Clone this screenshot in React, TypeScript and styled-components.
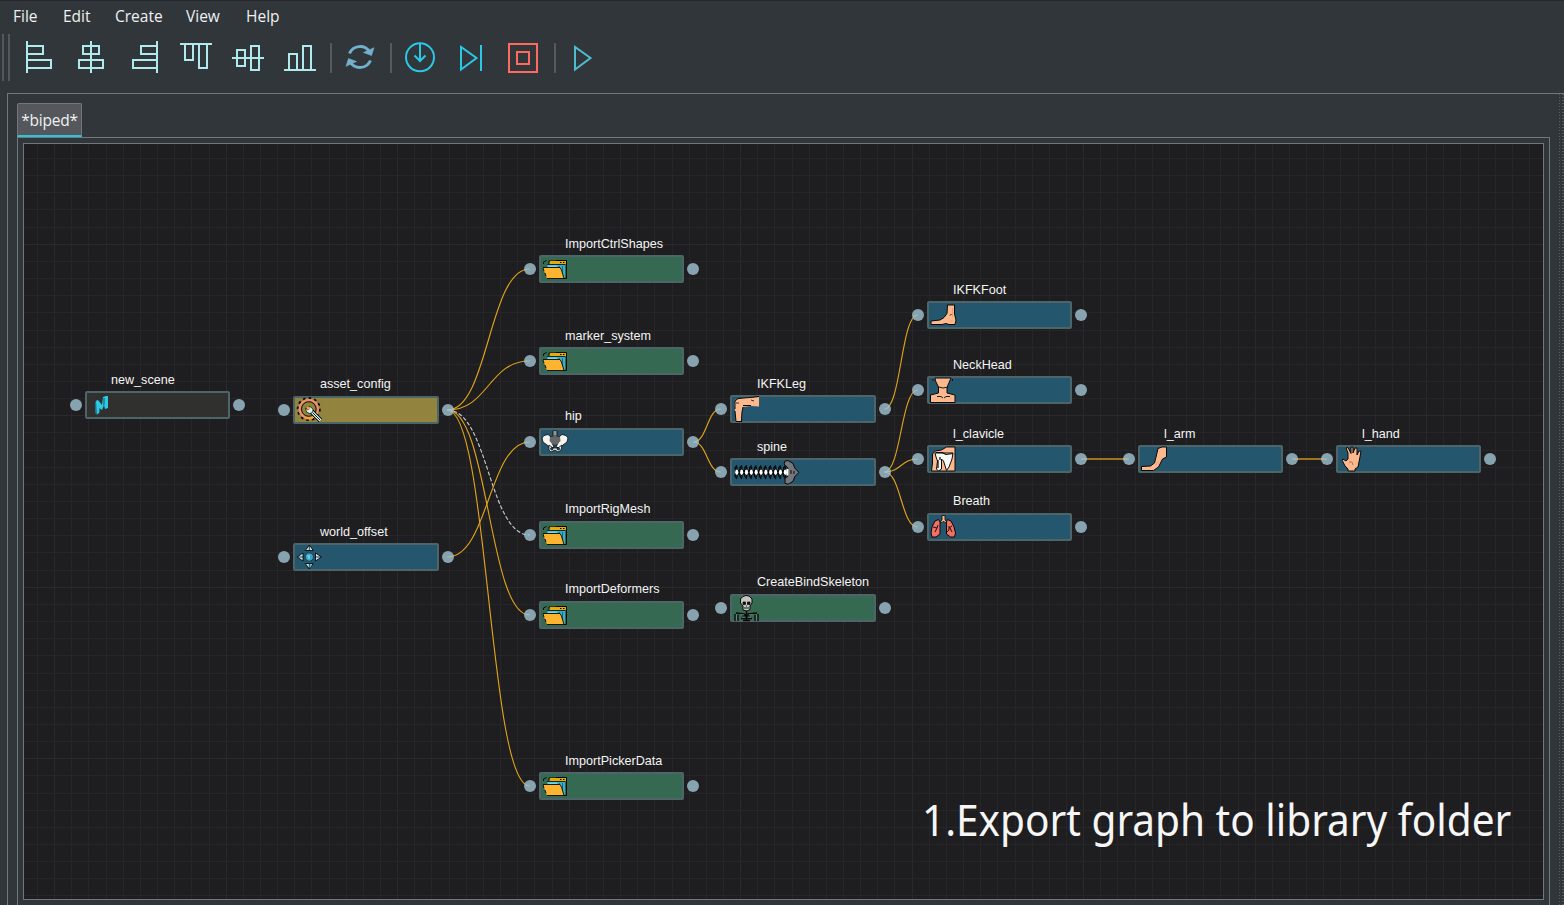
import React from "react";
import styled, { createGlobalStyle } from "styled-components";

const GlobalStyle = createGlobalStyle`
  * { box-sizing: border-box; }
  html, body { margin: 0; height: 100%; overflow: hidden; background: #31363b; }
`;

const Window = styled.div`
  width: 1564px;
  height: 905px;
  display: flex;
  flex-direction: column;
  overflow: hidden;
  background: #31363b;
  border-top: 1px solid #24282c;
  color: #eff0f1;
  font-family: "Open Sans", "Noto Sans", sans-serif;
`;

const MenuBar = styled.nav`
  display: flex;
  flex: none;
  height: 33px;
  padding-left: 13px;
`;

const MenuItem = styled.span<{ $width: number }>`
  width: ${(p) => p.$width}px;
  font-size: 15.5px;
  line-height: 31px;
  white-space: nowrap;
`;

const ToolBar = styled.div`
  display: flex;
  flex: none;
  height: 48px;
`;

const Grip = styled.div`
  width: 13px;
  height: 47px;
  padding-left: 2px;
  display: flex;
  gap: 4px;
  &::before, &::after {
    content: "";
    width: 2px;
    height: 47px;
    background: #54585b;
  }
`;

const ToolButton = styled.svg<{ $color: string }>`
  width: 52px;
  height: 48px;
  flex: none;
  fill: none;
  stroke: ${(p) => p.$color};
  stroke-width: 2;
`;

const Separator = styled.div<{ $inset?: number }>`
  width: 9px;
  padding: 9px 0 9px ${(p) => p.$inset ?? 4}px;
  &::before {
    content: "";
    display: block;
    width: 2px;
    height: 30px;
    background: #565a5d;
  }
`;

const Workspace = styled.div`
  flex: 1;
  display: flex;
  margin: 11px 0 0 7px;
  border-top: 1px solid #71777a;
  border-left: 1px solid #71777a;
`;

const TabArea = styled.div`
  width: 1541px;
  padding: 9px 0 0 9px;
`;

const Tab = styled.div`
  width: 65px;
  height: 34px;
  border: 1px solid #71777a;
  border-bottom: 2px solid #2fc4dc;
  border-radius: 2px 2px 0 0;
  background: #54575b;
  font-size: 15.5px;
  letter-spacing: -0.25px;
  line-height: 32px;
  text-align: center;
`;

const Pane = styled.div`
  width: 1533px;
  height: 780px;
  padding: 5px;
  border: 1px solid #71777a;
`;

const Canvas = styled.div`
  position: relative;
  width: 1521px;
  height: 757px;
  border: 1px solid #71777a;
  overflow: hidden;
  background: #1e1e20;
`;

const DotStrip = styled.div`
  display: flex;
  gap: 2px;
  margin-left: 10px;
  width: 5px;
  &::before, &::after {
    content: "";
    width: 1px;
    background: repeating-linear-gradient(#555b5f 0 1px, transparent 1px 3px);
  }
  &::after {
    width: 2px;
  }
`;

const Wires = styled.svg`
  position: absolute;
  inset: 0;
  width: 1519px;
  height: 755px;
`;

type Kind = "scene" | "config" | "module" | "import";
const fills: Record<Kind, string> = {
  scene: "#30302f",
  config: "#92833f",
  module: "#24566d",
  import: "#366951",
};

const NodeRoot = styled.div<{ $x: number; $y: number; $wide?: boolean }>`
  position: absolute;
  left: ${(p) => p.$x - 24}px;
  top: ${(p) => p.$y - 144}px;
  width: ${(p) => (p.$wide ? 146 : 145)}px;
  height: 28px;
`;

const NodeBody = styled.div<{ $kind: Kind }>`
  width: 100%;
  height: 28px;
  border: 2px solid #4d6469;
  border-radius: 2px;
  background: ${(p) => fills[p.$kind]};
`;

const NodeIcon = styled.svg`
  position: absolute;
  left: 0;
  top: 0;
  width: 72px;
  height: 28px;
  stroke: #080808;
  stroke-width: 1;
`;

const NodeLabel = styled.span<{ $drop: number; $wide?: boolean }>`
  position: absolute;
  left: ${(p) => (p.$wide ? 27 : 26)}px;
  top: ${(p) => p.$drop - 20}px;
  font: 12.6px/16px "Liberation Sans", sans-serif;
  color: #f4f4f4;
  white-space: nowrap;
`;

const Port = styled.i<{ $side: "in" | "out" }>`
  position: absolute;
  top: 7.75px;
  ${(p) => (p.$side === "in" ? "left: -15.5px;" : "right: -15.3px;")}
  width: 12px;
  height: 12px;
  border-radius: 50%;
  background: rgba(161, 196, 212, 0.8);
`;

const Caption = styled.div`
  position: absolute;
  left: 898px;
  top: 646px;
  font-family: "Noto Sans", sans-serif;
  font-size: 43px;
  line-height: 60px;
  white-space: nowrap;
  color: #f6f6f6;
  transform-origin: 0 0;
  transform: scaleX(0.943);
`;

const skin = "#fdb98d";

const icons: Record<string, React.ReactNode> = {
  maya: (
    <g stroke="none">
      <path d="M10 11l2-2 3 3v9l-3 3-2-2z" fill="#24708a" />
      <path d="M11 10l2-1 4 5 1-8 3-1h2v12l-3 1-1-4-2 5-3-2v5l-2 1z" fill="#2bcbe6" />
      <path d="M18 7h2v6l-2 3z" fill="#2489a3" />
    </g>
  ),
  gear: (
    <g>
      <circle cx="15.8" cy="13" r="11" fill="none" strokeWidth="2" strokeDasharray="2.6 3.1" />
      <circle cx="15.8" cy="13" r="9.2" fill="none" stroke="#f58e70" strokeWidth="2.2" />
      <path d="M24 17a9.200 9.200 0 0 1-11 4.800" fill="none" stroke="#fba62a" strokeWidth="2.4" />
      <circle cx="15.8" cy="13" r="7.3" fill="none" strokeWidth="0.9" />
      <path d="M17 14l10.500 10.500" strokeWidth="4.6" />
      <path d="M17 14l10.500 10.500" stroke="#d5f3f5" strokeWidth="3" />
      <path d="M12.500 12l1 4 3 1.500 3-1 .5-3-2-2.500-2-.5v2.500l-1 1z" fill="#d5f3f5" strokeWidth="0.7" />
      <path d="M20 17l7 7" strokeWidth="0.9" />
      <path d="M14 11h2.500v2.500H14z" fill="#fba62a" stroke="none" />
    </g>
  ),
  move: (
    <g fill="#c7eef1">
      <path d="M16.3 2l4 5.500h-8zM16.3 26l4-5.500h-8zM4 14l6-4v8zM28.500 14l-6-4v8z" strokeWidth="0.9" />
      <path d="M16.300 2v5.500M16.300 26v-5.500M5 14h5M28 14h-5" strokeWidth="0.8" />
      <path d="M17 21h2l-2 4z" fill="#2fc4dc" stroke="none" />
      <circle cx="16.3" cy="14" r="4.2" fill="#3d9fc0" stroke="#1d3f50" />
      <path d="M14 12h3v4h-2z" fill="#57d3e8" stroke="none" />
    </g>
  ),
  folder: (
    <g>
      <path d="M4.500 9V7l3-1.500" fill="none" />
      <path d="M10 9.500V6h6.500M16.500 5.500h11V23.500H25" fill="none" />
      <path d="M11 6h16v3H10.500z" fill="#e8a90d" stroke="none" />
      <path d="M8 9h18v14H9z" fill="#39aecb" stroke="none" />
      <path d="M8 9.500h18" strokeWidth="0.8" />
      <path d="M21 7.500h1.500M24 7.500h1.500" />
      <path d="M20.500 11v3M23.500 11v8" stroke="#1b6d86" />
      <path d="M9 10.500h9v1.500H9z" fill="#74d8e4" stroke="none" />
      <path d="M4 13l4-.5h13l1 2 3 9H8l-1.500-4z" fill="#feb42f" stroke="none" />
      <path d="M4 12.500h17l1.500 2.500 2.500 8.500H8M4 13l1 3M6 18l1 3" fill="none" strokeWidth="0.9" />
    </g>
  ),
  hip: (
    <g fill="#f4f4f1" strokeWidth="0.8">
      <path d="M14 3h4v6h-4z" />
      <path d="M14 5h4M14 7h4" />
      <path d="M11 9l5-1 5 1 1 4-4 4h-4l-4-4z" fill="#66676b" />
      <path d="M5 7.500l4-1 3 2.500 .5 5 2.500 5-3 1-4-3-4-3-1-4zM27 7.500l-4-1-3 2.500-.5 5-2.500 5 3 1 4-3 4-3 1-4z" />
      <path d="M11 9l5-1 5 1 .5 4-3.500 3.500h-4L10.500 13z" fill="#66676b" stroke="none" />
      <path d="M10 17l4 3h5l4-3-1 5-3 2-3-2-4 2-2-2z" />
      <circle cx="12.8" cy="20.8" r="1.2" fill="#24566d" />
      <circle cx="19.3" cy="20.8" r="1.2" fill="#24566d" />
    </g>
  ),
  knee: (
    <g>
      <path d="M5 5l7-2 8-.5 9-.5v9.500l-8-.5-8 1-1 5-1 10H6l-1-11-.5-6z" fill={skin} stroke="none" />
      <path d="M5 14V6l3-2.500 12-1 9-1M5 16l1 10.500h6M13 12l-1 5-.5 9M13 10.500h8" fill="none" />
      <path d="M6 8h3M21 5l3 1" fill="none" strokeWidth="0.8" />
    </g>
  ),
  spine: (
    <g>
      <path d="M5 14.300h51" strokeWidth="5" />
      {Array.from({ length: 11 }, (_, i) => (
        <g key={i}>
          <path d={`M${7 + i * 4.85} 7.5l-2 2.5 1 4-1 4 2 3M${7 + i * 4.85} 9v10.5`} fill="none" strokeWidth="1.3" />
          <ellipse cx={6.8 + i * 4.85} cy="14.3" rx="1.6" ry="2.7" fill="#fff" stroke="none" />
        </g>
      ))}
      <path d="M54 6l1-3 3-.5 5 3 2 5 4 3.800-4 4-2 5-5 3-3-1v-5l3-2v-8z" fill="#77767a" />
      <path d="M57.500 11v6.500" stroke="#fff" strokeWidth="2" />
      <path d="M61 12v4M64 13v3" />
    </g>
  ),
  skeleton: (
    <g fill="#c4c5c1">
      <path d="M13 2.500l3-1 3 .5 3 3v4l-2 3v3.500l-3 1.500-4-1v-4l-2.500-3V5z" />
      <path d="M13 8h2.500v2.500H13zM17.500 8H20v2.500h-2.500z" fill="#111" strokeWidth="0.7" />
      <path d="M14 14h5M16.500 11.500v1" strokeWidth="0.9" />
      <path d="M6 19l8 1 2 1 2-1 9-1M5 20v7M8 21v6M25 21v6M28 20v7M12 22h8M11 24.500h11M13 26.500h7M16.500 17v10" fill="none" strokeWidth="1.3" />
      <path d="M6.500 20.500v6M26.500 20.500v6M10 20.800h4M19 20.800h4M12 23.200h3M18 23.200h3" stroke="#777c79" />
    </g>
  ),
  foot: (
    <g>
      <path d="M20.500 4h7v9l1.500 6-1 4.500h-6l-3-1-4 1H4v-3.500l9-1 4-2.500 3-4z" fill={skin} />
      <path d="M23 14.500l1.500-1.500" />
      <path d="M25.500 7v9M23 20h3" stroke="#f39b70" />
    </g>
  ),
  neck: (
    <g>
      <path d="M8 2h16l-3 7-1 3v5l8 2v7.500H3.500V19l8-2v-6L8.500 5z" fill={skin} />
      <path d="M12 11l4 1 5-1M6 3v2M25.500 3v2M10 20.500h4l2 1.500M23 20.500h-4l-2 1.500" fill="none" strokeWidth="0.9" />
    </g>
  ),
  clavicle: (
    <g>
      <path d="M4.500 26l1-8V9l3-3 6-1 5-3h8.500v24z" fill={skin} />
      <path d="M8 8h18l-1 6-3 8-2.500 3.500-3-9.500-2-2v10l-3 2-2-2 1-8-1.500-4z" fill="#f8f9f5" />
      <path d="M9 7.500h6l4 2 7-1M13 12v3M11 15v8" fill="none" strokeWidth="1.2" />
    </g>
  ),
  lungs: (
    <g>
      <path d="M11.500 6.500L8 8l-3 6-1 6 1 4h4l4-3V9zM20.500 6.500L24 8l3 6 1.500 6-1 4h-4l-4-3V9z" fill="#f56f63" />
      <path d="M15 2.500h3v4.500l2 2-2 .5-1.500-1.500-1.500 1.500-2-.5 2-2z" fill={skin} strokeWidth="0.8" />
      <path d="M6 14l4 1 1-3M10 15l-2 4M22 13v4l-2 2M22 15l3-2M23 15l2 4" fill="none" strokeWidth="0.9" />
    </g>
  ),
  arm: (
    <g>
      <path d="M20 3.500l4-1.500h4.500v10l-4 2-4 8-5 3.500H3.500v-4l9-.5 4-3 2-8z" fill={skin} />
      <path d="M18 20l2-4" stroke="#f39b70" />
    </g>
  ),
  hand: (
    <g>
      <path d="M12 14V8l-2-5 2-.5 3 6V2h2v6l2-5h2v7l2-4h2l-1 6-1 5-1 5-3 2v2h-7v-2l-3-3-3-6 1-1 3 2z" fill={skin} />
      <path d="M13 17l3 0 1 3" stroke="#c5724b" fill="none" />
    </g>
  ),
};

interface GraphNode { name: string; x: number; y: number; kind: Kind; icon: string; wide?: boolean; drop?: number }

const nodes: GraphNode[] = [
  { name: "new_scene", x: 85, y: 391, kind: "scene", icon: "maya", drop: 1 },
  { name: "asset_config", x: 293, y: 396, kind: "config", icon: "gear", wide: true },
  { name: "world_offset", x: 293, y: 543, kind: "module", icon: "move", wide: true, drop: 1 },
  { name: "ImportCtrlShapes", x: 539, y: 255, kind: "import", icon: "folder", drop: 1 },
  { name: "marker_system", x: 539, y: 347, kind: "import", icon: "folder", drop: 1 },
  { name: "hip", x: 539, y: 428, kind: "module", icon: "hip" },
  { name: "ImportRigMesh", x: 539, y: 521, kind: "import", icon: "folder" },
  { name: "ImportDeformers", x: 539, y: 601, kind: "import", icon: "folder" },
  { name: "ImportPickerData", x: 539, y: 772, kind: "import", icon: "folder", drop: 1 },
  { name: "IKFKLeg", x: 730, y: 395, kind: "module", icon: "knee", wide: true, drop: 1 },
  { name: "spine", x: 730, y: 458, kind: "module", icon: "spine", wide: true, drop: 1 },
  { name: "CreateBindSkeleton", x: 730, y: 594, kind: "import", icon: "skeleton", wide: true },
  { name: "IKFKFoot", x: 927, y: 301, kind: "module", icon: "foot", drop: 1 },
  { name: "NeckHead", x: 927, y: 376, kind: "module", icon: "neck", drop: 1 },
  { name: "l_clavicle", x: 927, y: 445, kind: "module", icon: "clavicle", drop: 1 },
  { name: "Breath", x: 927, y: 513, kind: "module", icon: "lungs" },
  { name: "l_arm", x: 1138, y: 445, kind: "module", icon: "arm", drop: 1 },
  { name: "l_hand", x: 1336, y: 445, kind: "module", icon: "hand", drop: 1 },
];

const edges: [string, string, boolean?][] = [
  ["asset_config", "ImportCtrlShapes"],
  ["asset_config", "marker_system"],
  ["asset_config", "ImportRigMesh", true],
  ["asset_config", "ImportDeformers"],
  ["asset_config", "ImportPickerData"],
  ["world_offset", "hip"],
  ["hip", "IKFKLeg"],
  ["hip", "spine"],
  ["IKFKLeg", "IKFKFoot"],
  ["spine", "NeckHead"],
  ["spine", "l_clavicle"],
  ["spine", "Breath"],
  ["l_clavicle", "l_arm"],
  ["l_arm", "l_hand"],
];

const find = (name: string) => nodes.find((n) => n.name === name)!;

function GridLines() {
  const step = 17.15;
  const cols = Array.from({ length: 89 }, (_, i) => i);
  const rows = Array.from({ length: 44 }, (_, i) => i);
  return (
    <g shapeRendering="crispEdges">
      {cols.map((i) => (
        <rect key={i} x={Math.round(13 + i * step)} y={0} width={1} height={755} fill={i % 10 === 1 ? "#2a2a2c" : "#262628"} />
      ))}
      {rows.map((i) => (
        <rect key={i} x={0} y={Math.round(14 + i * step)} width={1519} height={1} fill={i % 10 === 5 ? "#2a2a2c" : "#262628"} />
      ))}
    </g>
  );
}

function Edge({ from, to, dashed }: { from: string; to: string; dashed?: boolean }) {
  const a = find(from);
  const b = find(to);
  const x1 = a.x + 154.4 - 24;
  const y1 = a.y + 14 - 144;
  const x2 = b.x - 9.3 - 24;
  const y2 = b.y + 14 - 144;
  const mid = (x1 + x2) / 2;
  const flat = y1 === y2;
  return (
    <path
      d={`M${x1} ${y1}C${mid} ${y1} ${mid} ${y2} ${x2} ${y2}`}
      fill="none"
      stroke={dashed ? "#c4c8cc" : flat ? "#9d7521" : "#dfa31a"}
      strokeWidth={flat ? 2 : 1.15}
      strokeDasharray={dashed ? "4 2" : undefined}
    />
  );
}

const menus: [string, number][] = [["File", 50], ["Edit", 52], ["Create", 71], ["View", 60], ["Help", 50]];

const pale = "#aeeaee";
const alignIcons = [
  "M14 8V40M14 13H30V21H14M14 27H38V35H14",
  "M26 8V40M18 13H34V21H18ZM14 27H38V35H14Z",
  "M40 8V40M40 13H24V21H40M40 27H16V35H40",
  "M11 11H43M16 11V27H24V11M30 11V35H38V11",
  "M11 25H43M16 17H24V33H16ZM30 13H38V37H30Z",
  "M11 37H43M16 37V21H24V37M30 37V13H38V37",
];

export default function App() {
  return (
    <>
      <GlobalStyle />
      <Window>
        <MenuBar>
          {menus.map(([label, width]) => (
            <MenuItem key={label} $width={width}>{label}</MenuItem>
          ))}
        </MenuBar>
        <ToolBar>
          <Grip />
          {alignIcons.map((d) => (
            <ToolButton key={d} $color={pale} viewBox="0 1 52 48"><path d={d} /></ToolButton>
          ))}
          <Separator $inset={5} />
          <ToolButton $color="#72b0cd" viewBox="0 1 52 48">
            <path d="M15.500 20.500A11.500 11.500 0 0 1 35.500 18.500M36.500 27.500A11.500 11.500 0 0 1 16.500 29.500" strokeWidth="3" />
            <path d="M40 14.700L37.500 22.500L29.500 19.500ZM12 33.300L14.500 25.500L22.500 28.500Z" fill="#72b0cd" strokeWidth="0.6" />
          </ToolButton>
          <Separator />
          <ToolButton $color="#2ac8e4" viewBox="0 1 52 48">
            <circle cx="25" cy="24.3" r="14" />
            <path d="M25 10V28M19.500 22.500L25 28L30.500 22.500" />
          </ToolButton>
          <ToolButton $color="#2ac8e4" viewBox="0 1 52 48"><path d="M14 14V36.500L29.500 25ZM34 12V38" /></ToolButton>
          <ToolButton $color="#fd6b60" viewBox="0 1 52 48"><path d="M10 11H38V39H10ZM18 19H30V31H18Z" /></ToolButton>
          <Separator $inset={3} />
          <ToolButton $color="#4fbccd" viewBox="0 1 52 48"><path d="M15 14V36.500L30.500 25Z" /></ToolButton>
        </ToolBar>
        <Workspace>
          <TabArea>
            <Tab>*biped*</Tab>
            <Pane>
              <Canvas>
                <Wires viewBox="0 0 1519 755">
                  <GridLines />
                  {edges.map(([from, to, dashed]) => (
                    <Edge key={from + to} from={from} to={to} dashed={dashed} />
                  ))}
                </Wires>
                {nodes.map((n) => (
                  <NodeRoot key={n.name} $x={n.x} $y={n.y} $wide={n.wide}>
                    <NodeLabel $drop={n.drop ?? 0} $wide={n.wide}>{n.name}</NodeLabel>
                    <Port $side="in" />
                    <NodeBody $kind={n.kind} />
                    <NodeIcon viewBox="0 0 72 28">{icons[n.icon]}</NodeIcon>
                    <Port $side="out" />
                  </NodeRoot>
                ))}
                <Caption>1.Export graph to library folder</Caption>
              </Canvas>
            </Pane>
          </TabArea>
          <DotStrip />
        </Workspace>
      </Window>
    </>
  );
}
